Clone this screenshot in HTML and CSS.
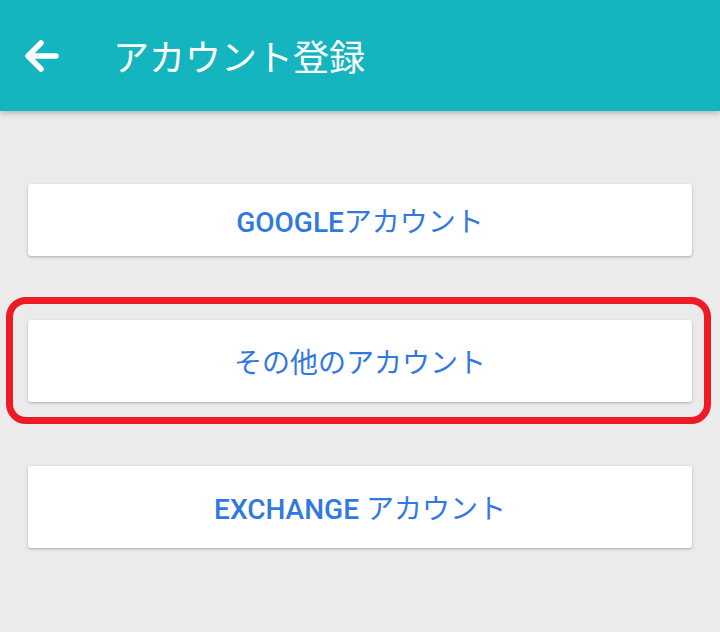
FILE: index.html
```html
<!DOCTYPE html>
<html lang="ja">
<head>
<meta charset="UTF-8">
<meta name="viewport" content="width=device-width, initial-scale=1.0">
<title>アカウント登録</title>
<link rel="stylesheet" href="styles.css">
</head>
<body>
<div class="toolbar">
    <span class="back-icon">
        <svg width="40" height="36" viewBox="0 0 40 36">
            <path d="M33 18H6M18 5L5 18L18 31" fill="none" stroke="#fff" stroke-width="5.5" stroke-linecap="round" stroke-linejoin="round"/>
        </svg>
    </span>
    <h1 class="title">アカウント登録</h1>
</div>

<div class="content">
    <button class="account-btn first"><span class="latin">GOOGLE</span>アカウント</button>
    <div class="highlight">
        <button class="account-btn">その他のアカウント</button>
    </div>
    <button class="account-btn"><span class="latin">EXCHANGE</span> アカウント</button>
</div>
</body>
</html>
```

FILE: styles.css
```css
body {
    margin: 0;
    padding: 0;
    background-color: #ebebeb;
    font-family: Roboto, "Noto Sans CJK JP", sans-serif;
}
.toolbar {
    height: 111px;
    background-color: #14b5bf;
    display: flex;
    align-items: center;
    box-shadow: 0 2px 6px rgba(0, 0, 0, 0.25);
    position: relative;
}
.back-icon {
    display: flex;
    margin-left: 23px;
}
.title {
    margin: 0 0 0 50px;
    color: #fff;
    font-size: 36px;
    font-weight: normal;
    line-height: 1;
    padding-top: 7px;
}
.content {
    padding-top: 73px;
}
.account-btn {
    display: block;
    width: 664px;
    height: 82px;
    margin: 0 28px 42px;
    padding: 0;
    background-color: #fff;
    border: none;
    border-radius: 3px;
    box-shadow: 0 1px 3px rgba(0, 0, 0, 0.28);
    color: #3079e0;
    font-family: Roboto, "Noto Sans CJK JP", sans-serif;
    font-size: 28px;
    font-weight: normal;
    cursor: pointer;
}
.account-btn.first {
    height: 72px;
    margin-bottom: 41px;
}
.latin {
    font-weight: 500;
}
.highlight {
    margin: 0 9px 42px 6px;
    padding: 16px 12px 15px 15px;
    border: 7px solid #ed1c24;
    border-radius: 20px;
}
.highlight .account-btn {
    margin: 0;
}
```
